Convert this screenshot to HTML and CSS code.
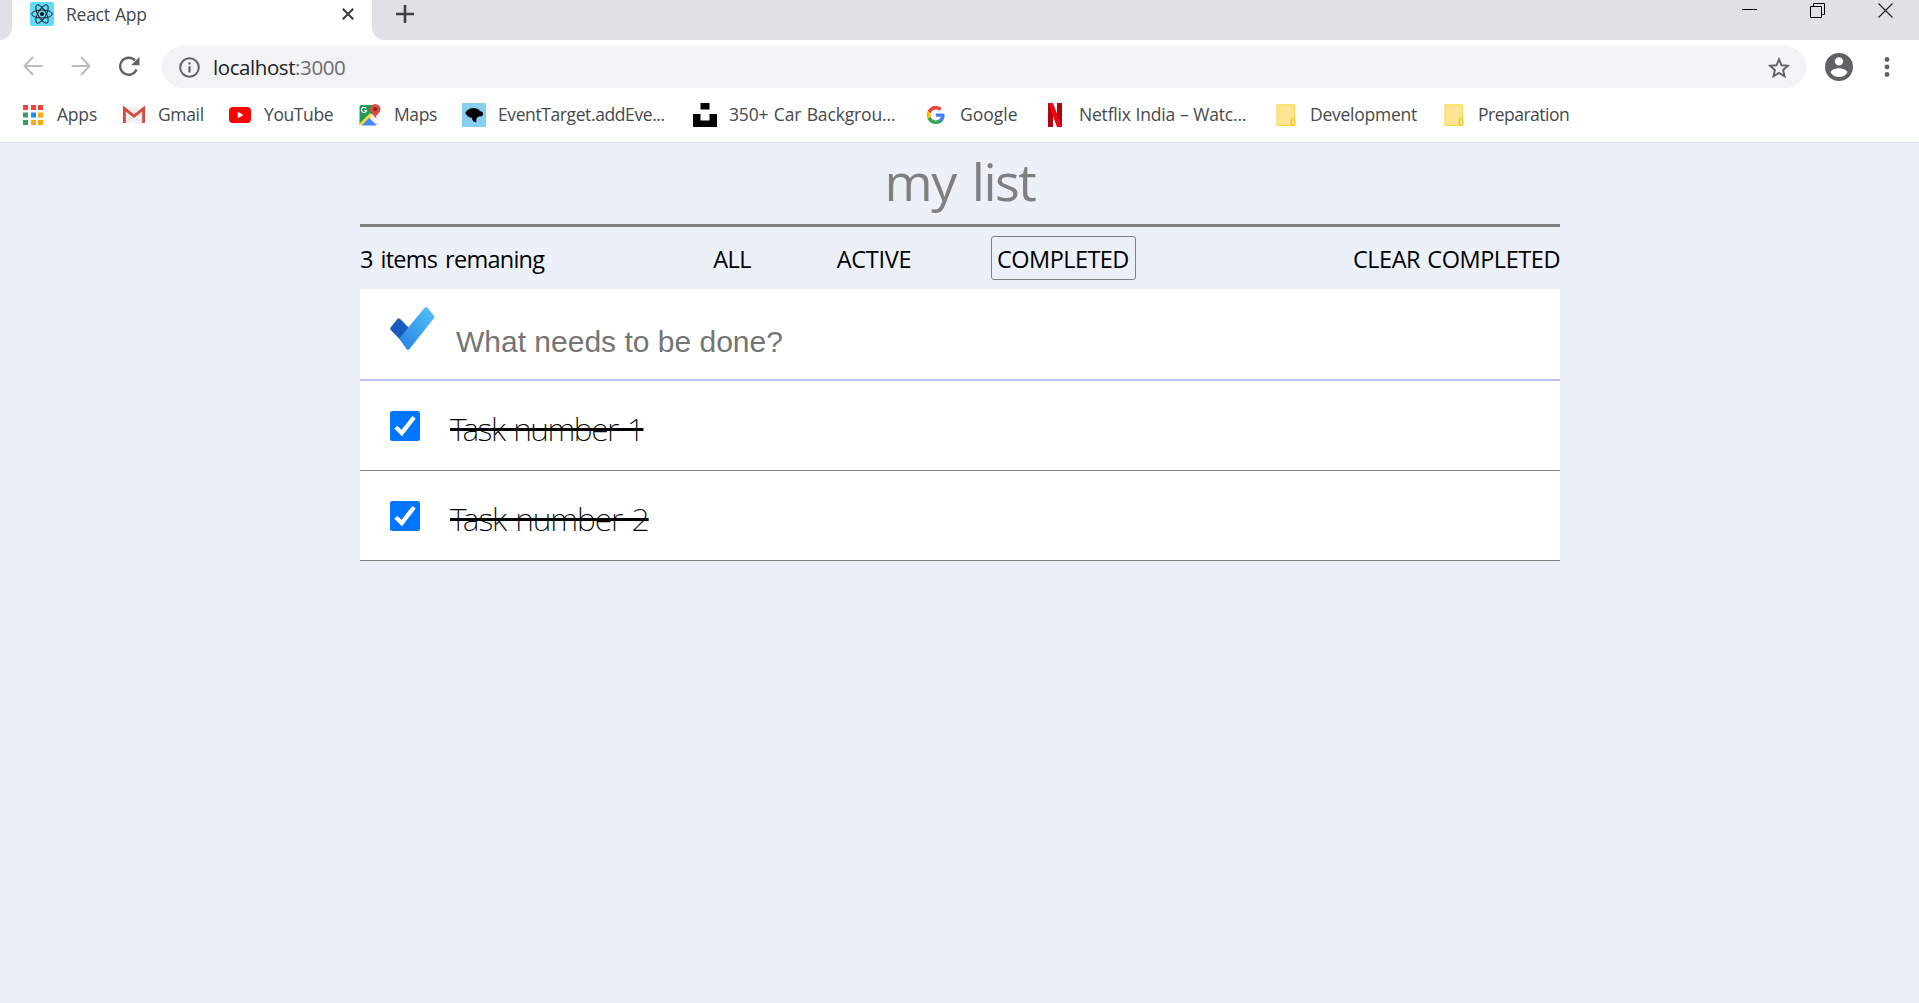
FILE: index.html
```html
<!DOCTYPE html>
<html lang="en">
<head>
<meta charset="utf-8">
<title>React App</title>
<link rel="stylesheet" href="styles.css">
</head>
<body>
<div class="browser">
  <div class="tabstrip">
    <div class="strip-left"></div>
    <div class="tab">
      <svg class="favicon" viewBox="0 0 24 24" width="24" height="24">
        <rect width="24" height="24" rx="2" fill="#61dafb"/>
        <g fill="none" stroke="#222" stroke-width="1">
          <ellipse cx="12" cy="12" rx="10.3" ry="4"/>
          <ellipse cx="12" cy="12" rx="10.3" ry="4" transform="rotate(60 12 12)"/>
          <ellipse cx="12" cy="12" rx="10.3" ry="4" transform="rotate(120 12 12)"/>
        </g>
        <circle cx="12" cy="12" r="2" fill="#111"/>
      </svg>
      <span class="tab-title">React App</span>
      <svg class="tab-close" viewBox="0 0 12 12" width="12" height="12"><path d="M.8.8l10.4 10.4M11.200.8L.8 11.200" stroke="#3c4043" stroke-width="2.100"/></svg>
    </div>
    <div class="strip-right">
      <svg class="new-tab" viewBox="0 0 18 18" width="18" height="18"><path d="M9 0v18M0 9h18" stroke="#3c4043" stroke-width="2.600"/></svg>
      <div class="window-controls">
        <svg viewBox="0 0 16 16" width="16" height="16"><path d="M0 6.500h15" stroke="#000"/></svg>
        <svg viewBox="0 0 16 16" width="16" height="16"><path d="M.5 3.500h11v11H.5zM3.500 3.500V.5h11v11h-3" fill="none" stroke="#000"/></svg>
        <svg viewBox="0 0 16 16" width="16" height="16"><path d="M.5.5l14 14M14.500.5l-14 14" stroke="#222" stroke-width="1.200"/></svg>
      </div>
    </div>
  </div>
  <div class="toolbar">
    <svg class="nav-back" viewBox="0 0 20 20" width="20" height="20"><path d="M19.500 10H1.500M10 1L1.500 10l8.500 9" fill="none" stroke="#babcbe" stroke-width="2"/></svg>
    <svg class="nav-forward" viewBox="0 0 20 20" width="20" height="20"><path d="M.5 10h18M10 1l8.500 9-8.500 9" fill="none" stroke="#babcbe" stroke-width="2"/></svg>
    <svg class="nav-reload" viewBox="0 0 21 21" width="21" height="21"><path d="M17.500 13.500A8.500 8.500 0 1 1 16 4.500" fill="none" stroke="#5f6368" stroke-width="2.400"/><path d="M20.500.8v8.400h-8.400z" fill="#5f6368"/></svg>
    <div class="omnibox">
      <svg viewBox="0 0 21 21" width="21" height="21"><circle cx="10.500" cy="10.500" r="9.300" fill="none" stroke="#5f6368" stroke-width="2"/><path d="M10.500 9.200v6.300M10.500 5.300v2.200" stroke="#5f6368" stroke-width="2.200"/></svg>
      <span class="url">localhost<span class="port">:3000</span></span>
      <svg class="star" viewBox="1.500 1.500 21 20" width="22" height="21"><path d="M12 3.800l2.400 5.600 6.100.5-4.600 4 1.400 6-5.300-3.200-5.300 3.200 1.400-6-4.600-4 6.100-.5z" fill="none" stroke="#5f6368" stroke-width="1.800"/></svg>
    </div>
    <svg class="profile" viewBox="2 2 20 20" width="28" height="28"><path fill="#5f6368" d="M12 2a10 10 0 1 0 0 20 10 10 0 0 0 0-20zm0 3a3 3 0 1 1 0 6 3 3 0 0 1 0-6zm0 14.200a7.200 7.200 0 0 1-6-3.220c.03-1.990 4-3.080 6-3.080s5.970 1.090 6 3.080a7.200 7.200 0 0 1-6 3.220z"/></svg>
    <svg class="kebab" viewBox="0 0 6 20" width="6" height="20" fill="#5f6368"><circle cx="3" cy="2.500" r="2.400"/><circle cx="3" cy="10" r="2.400"/><circle cx="3" cy="17.500" r="2.400"/></svg>
  </div>
  <div class="bookmarks">
    <div class="bookmark">
      <svg viewBox="0 0 24 24"><g fill="#f44336"><path d="M2 2h5v5H2zM10 2h5v5h-5zM17 2h5v5h-5z"/></g><path d="M2 9.500h5v5H2zM2 17h5v5H2z" fill="#34a05a"/><path d="M10 9.500h5v5h-5z" fill="#1e88f5"/><path d="M17 9.500h5v5h-5zM10 17h5v5h-5zM17 17h5v5h-5z" fill="#f9ab0d"/></svg>
      <span class="t-apps">Apps</span>
    </div>
    <div class="bookmark">
      <svg viewBox="0 0 24 24"><path d="M2 4h20v16H2z" fill="#f1f1f1"/><path d="M4.500 19.500L12 13l7.500 6.500" fill="none" stroke="#ddd"/><path d="M2.400 20V5.500L12 13.200l9.600-7.700V20" fill="none" stroke="#dc4a3e" stroke-width="2.900"/></svg>
      <span class="t-gmail">Gmail</span>
    </div>
    <div class="bookmark">
      <svg viewBox="0 0 24 24"><rect x="1" y="4" width="22" height="16" rx="4" fill="#f00"/><path d="M9.800 8.800v6.400l5.600-3.200z" fill="#fff"/></svg>
      <span class="t-youtube">YouTube</span>
    </div>
    <div class="bookmark">
      <svg viewBox="0 0 24 24"><path d="M2 2.500h14l5 8V22H2z" fill="#e8eaed"/><path d="M1.500 4a2 2 0 0 1 2-2H15l1 8L1.500 22z" fill="#1f9d58"/><path d="M1.500 20.500L12 10l3 3L4 22.500z" fill="#fdd23c"/><path d="M3.500 22.500L11 15l8 7.500z" fill="#4285f4"/><path d="M12 13l2-2 7 8v2.500z" fill="#fff"/><path d="M8.200 5.400A2.600 2.600 0 1 0 8.600 7.500H6.300" fill="none" stroke="#fff" stroke-width="1.200"/><path d="M17.200 1a5.300 5.300 0 0 0-5.300 5.300c0 4 4.300 5 5.300 9.300 1-4.300 5.300-5.300 5.300-9.300A5.300 5.300 0 0 0 17.200 1z" fill="#dd4b3e"/><circle cx="17.200" cy="6.200" r="1.900" fill="#7c231b"/></svg>
      <span class="t-maps">Maps</span>
    </div>
    <div class="bookmark">
      <svg viewBox="0 0 24 24"><path d="M0 0h24v24H0z" fill="#87cff0"/><path d="M3.500 9.500l2-2.500L9 5.200l4-.2 3.500 1.500L18 8l2.500 1 .7 2.200-1.200 2-3 .4-1.500.6-1 1.300-.3 4-2.700-.9-1.500-2.400.2-1.700-2.700.5.5-1.200L5 13.500l.5-1.500-1.700-.3z" fill="#000"/></svg>
      <span class="t-event">EventTarget.addEve...</span>
    </div>
    <div class="bookmark">
      <svg viewBox="0 0 24 24"><path d="M7.500 0h9v6.500h-9zM0 11h7.500v6.500h9V11H24v13H0z"/></svg>
      <span class="t-car">350+ Car Backgrou...</span>
    </div>
    <div class="bookmark">
      <svg viewBox="-3.500 -3.700 31.500 31.500"><path fill="#4285f4" d="M23.500 12.300c0-.8-.1-1.600-.2-2.300H12v4.500h6.500a5.500 5.500 0 0 1-2.400 3.600v3h3.900c2.200-2 3.500-5.100 3.500-8.800z"/><path fill="#34a853" d="M12 24c3.200 0 6-1.100 8-2.900l-3.900-3a7.200 7.200 0 0 1-10.800-3.800h-4v3.100A12 12 0 0 0 12 24z"/><path fill="#fbbc05" d="M5.300 14.300a7.200 7.200 0 0 1 0-4.600V6.600h-4a12 12 0 0 0 0 10.800z"/><path fill="#ea4335" d="M12 4.800c1.800 0 3.300.6 4.600 1.800L20 3.200A12 12 0 0 0 1.300 6.600l4 3.100A7.200 7.200 0 0 1 12 4.800z"/></svg>
      <span class="t-google">Google</span>
    </div>
    <div class="bookmark">
      <svg viewBox="0 0 24 24"><path d="M5 0h5v24H5zM14 0h5v24h-5z" fill="#b1060f"/><path d="M5 0h5l9 24h-5z" fill="#e50914"/></svg>
      <span class="t-netflix">Netflix India – Watc...</span>
    </div>
    <div class="bookmark">
      <svg viewBox="0 0 24 24"><path d="M3 1.800h17.500v20.500H3z" fill="#ffe591" stroke="#fbd94f" stroke-width="1.200"/><path d="M17.300 22v-5.500q0-1 1-1h1.500q1 0 1 1V22z" fill="#ffe591" stroke="#f0c224" stroke-width="1.200"/></svg>
      <span class="t-dev">Development</span>
    </div>
    <div class="bookmark">
      <svg viewBox="0 0 24 24"><path d="M3 1.800h17.500v20.500H3z" fill="#ffe591" stroke="#fbd94f" stroke-width="1.200"/><path d="M17.300 22v-5.500q0-1 1-1h1.500q1 0 1 1V22z" fill="#ffe591" stroke="#f0c224" stroke-width="1.200"/></svg>
      <span class="t-prep">Preparation</span>
    </div>
  </div>
</div>
<main class="app">
  <h1 class="title">my list</h1>
  <div class="filters">
    <span class="remaining">3 items remaning</span>
    <div class="filter-group">
      <span class="filter f-all">ALL</span>
      <span class="filter f-active">ACTIVE</span>
      <span class="filter f-completed selected">COMPLETED</span>
    </div>
    <span class="clear">CLEAR COMPLETED</span>
  </div>
  <div class="list">
    <div class="new-task">
      <svg class="logo" viewBox="0 0 46 46" width="46" height="46">
        <defs>
          <linearGradient id="long" x1="0" y1="1" x2="1" y2="0"><stop offset=".1" stop-color="#2987e6"/><stop offset="1" stop-color="#57c3f7"/></linearGradient>
        </defs>
        <path d="M1.800 21.300L8.600 12.800q1.200-1.200 2.400 0l10 10.200L11.500 34 1.800 24q-1.200-1.300 0-2.700z" fill="#185abd"/>
        <path d="M10.200 32.500L35.600 1.800q1.500-1.500 3 0l6.200 7.700q1.200 1.500 0 3L20.300 43.200q-1.300 1.400-2.700 0z" fill="url(#long)"/>
      </svg>
      <span class="placeholder">What needs to be done?</span>
    </div>
    <div class="task">
      <svg viewBox="0 0 30 30" width="30" height="30"><rect width="30" height="30" rx="2.500" fill="#0075ff"/><path d="M5.800 16.300l6 5.700L24 6.200" fill="none" stroke="#fff" stroke-width="4.300"/></svg>
      <span class="task-name one">Task number 1</span>
    </div>
    <div class="task">
      <svg viewBox="0 0 30 30" width="30" height="30"><rect width="30" height="30" rx="2.500" fill="#0075ff"/><path d="M5.800 16.300l6 5.700L24 6.200" fill="none" stroke="#fff" stroke-width="4.300"/></svg>
      <span class="task-name two">Task number 2</span>
    </div>
  </div>
</main>
</body>
</html>
```
FILE: styles.css
```css
* { box-sizing: border-box; }
body {
  margin: 0;
  min-height: 1003px;
  overflow: hidden;
  background: #ecf1f9;
  font-family: "Open Sans", "Noto Sans", sans-serif;
  color: #000;
}
svg { display: block; flex: none; }
span { white-space: nowrap; }

/* browser chrome */
.browser { height: 143px; background: #fff; border-bottom: 1px solid #d5dbe4; }
.tabstrip { display: flex; height: 40px; }
.strip-left { width: 12px; background: #dee1e6; border-bottom-right-radius: 12px; }
.tab { display: flex; align-items: center; width: 360px; height: 28px; padding: 0 18px; }
.tab-title { margin: -1px 0 0 12px; font-size: 17.5px; letter-spacing: -.25px; word-spacing: 1px; line-height: 28px; color: #45494d; }
.tab-close { margin-left: auto; }
.strip-right {
  flex: 1;
  display: flex;
  justify-content: space-between;
  padding: 5px 25px 0 24px;
  background: #dee1e6;
  border-bottom-left-radius: 12px;
}
.window-controls { display: flex; gap: 52px; margin-top: -2px; }
.toolbar { display: flex; align-items: center; height: 48px; margin-top: 3px; padding-left: 23px; }
.nav-back, .nav-forward, .nav-reload { margin-top: -2px; }
.nav-forward { margin-left: 28px; }
.nav-reload { margin-left: 28px; }
.omnibox {
  display: flex;
  align-items: center;
  width: 1644px;
  height: 42px;
  margin-left: 22px;
  padding: 0 16px 0 17px;
  border-radius: 21px;
  background: #f1f3f4;
}
.url { margin-left: 13px; font-size: 20.500px; letter-spacing: -.42px; color: #202124; }
.port { color: #6a6e72; }
.star { margin-left: auto; }
.profile { margin: -1px 0 0 19px; }
.kebab { margin: -1px 0 0 31px; }
.bookmarks {
  display: grid;
  grid-template-columns: 101px 106px 130px 104px 231px 231px 119px 231px 168px auto;
  height: 48px;
  padding-left: 21px;
}
.bookmark { display: flex; align-items: center; gap: 12px; font-size: 17.500px; color: #45494d; }
.bookmark svg { width: 24px; height: 24px; }
.bookmark span { margin-top: -2px; }
.t-apps { letter-spacing: -.2px; }
.t-gmail { letter-spacing: -.35px; }
.t-youtube { letter-spacing: -.4px; }
.t-maps { letter-spacing: -.4px; }
.t-event { letter-spacing: -.4px; }
.t-car { letter-spacing: -.15px; word-spacing: 1px; }
.t-google { letter-spacing: 0; }
.t-netflix { letter-spacing: -.2px; word-spacing: .5px; }
.t-dev { letter-spacing: -.25px; }
.t-prep { letter-spacing: -.5px; }

/* to-do app */
.app { width: 1200px; margin: 0 auto 0 360px; }
.title {
  height: 84px;
  margin: 0;
  border-bottom: 3px solid #808080;
  font-size: 52px;
  font-weight: 400;
  letter-spacing: -1.500px;
  word-spacing: 4px;
  line-height: 75px;
  text-align: center;
  color: #808080;
}
.filters { display: flex; align-items: center; height: 62px; font-size: 23.500px; }
.remaining { width: 347px; padding-top: 2px; letter-spacing: -.75px; word-spacing: 2.500px; }
.filter-group { display: flex; justify-content: space-between; width: 429px; }
.filter {
  height: 44px;
  padding: 0 6px 0 5px;
  border: 1px solid transparent;
  border-radius: 3px;
  line-height: 44px;
  text-align: center;
}
.selected { border-color: #808080; }
.f-all { width: 51px; letter-spacing: -.6px; }
.f-active { width: 89px; letter-spacing: -.3px; }
.f-completed { width: 145px; letter-spacing: -.55px; }
.clear { margin-left: auto; padding-top: 2px; letter-spacing: -.45px; word-spacing: 1.500px; }
.list { background: #fff; }
.new-task {
  display: flex;
  height: 92px;
  padding: 17px 29px 0;
  border-bottom: 2px solid #c0c0ff;
}
.placeholder {
  margin: 18px 0 0 21px;
  font: 30px/36px "Liberation Sans", Arial, sans-serif;
  color: #757575;
}
.task {
  display: flex;
  gap: 30px;
  height: 90px;
  padding: 30px 30px 0;
  border-bottom: 1px solid #808080;
}
.task-name {
  margin-top: -2px;
  font-family: "Noto Sans", "Open Sans", sans-serif;
  font-size: 32px;
  font-weight: 200;
  line-height: 40px;
  height: 40px;
  word-spacing: 2px;
  text-decoration: line-through 3px #000;
}
.one { letter-spacing: -1.500px; }
.two { letter-spacing: -1.100px; }
```
